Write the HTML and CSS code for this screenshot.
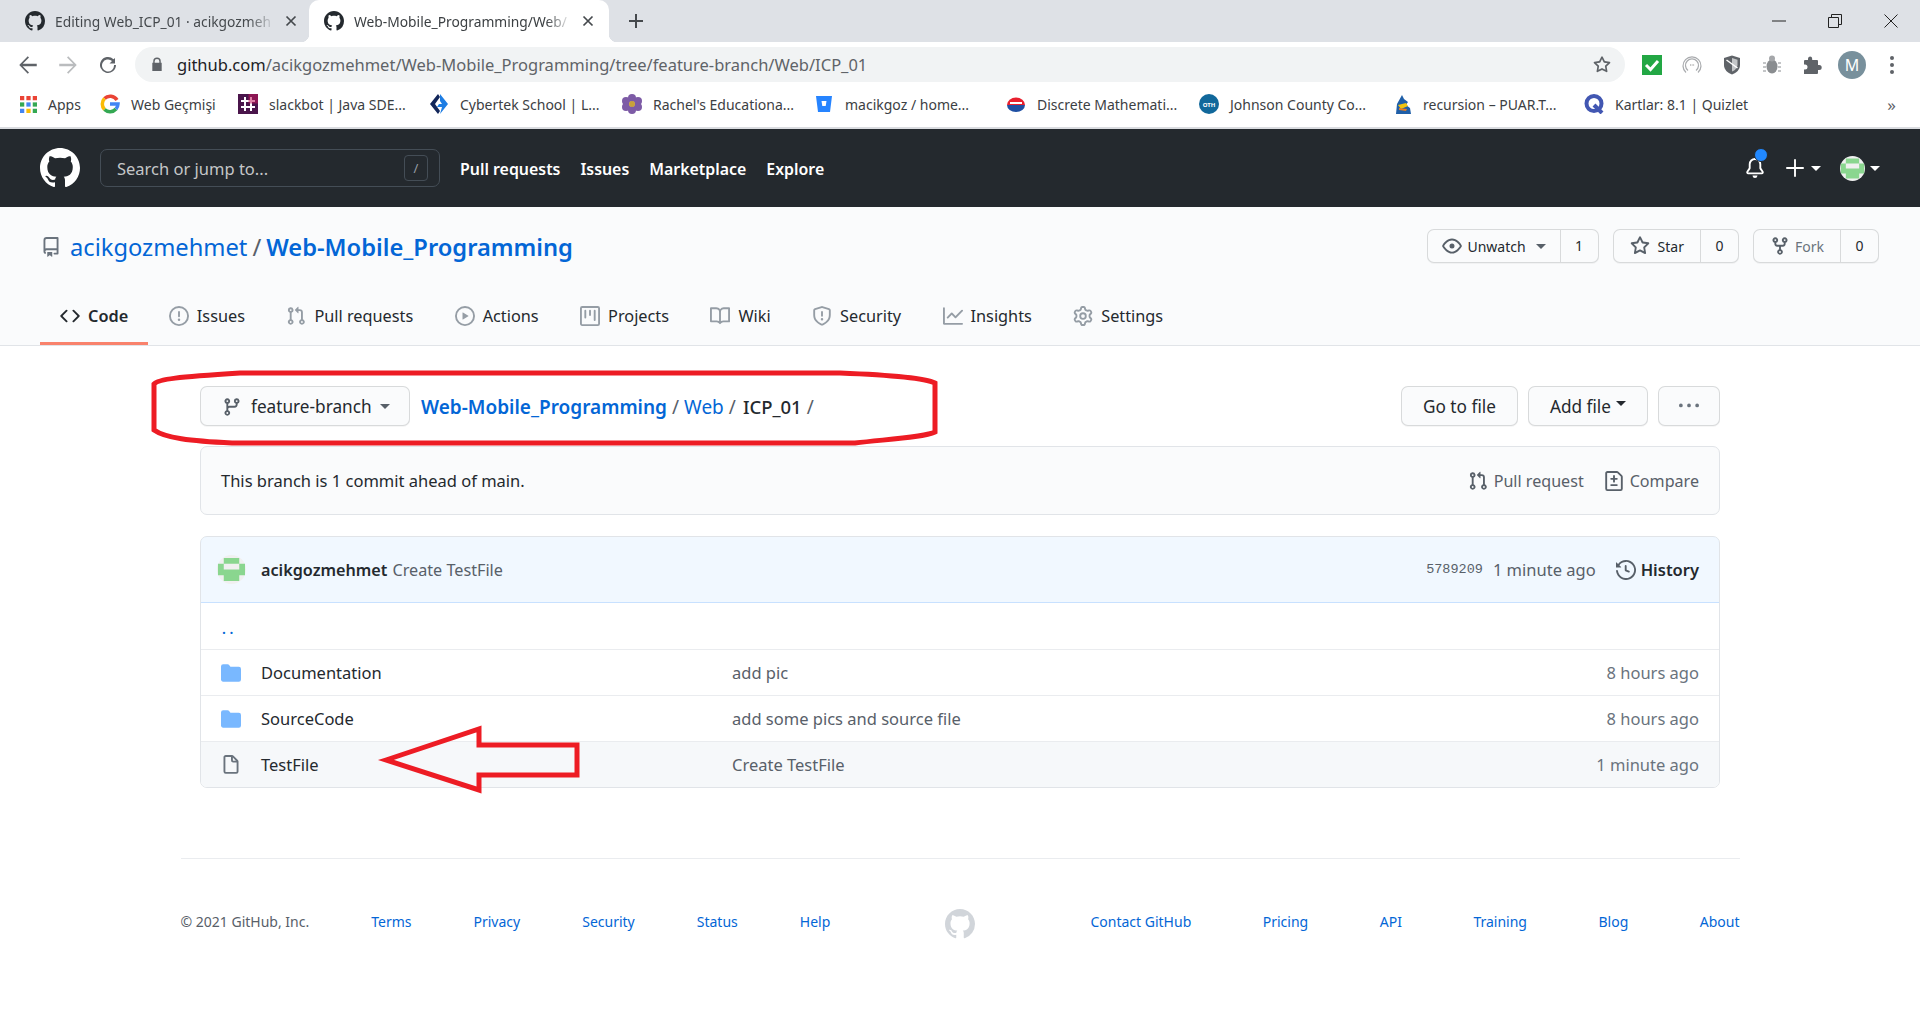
FILE: index.html
```html
<!DOCTYPE html>
<html>
<head>
	<meta charset="utf-8">
	<title>Web-Mobile_Programming/Web/ICP_01</title>
	<link rel="stylesheet" href="styles.css">
</head>
<body>
	<svg class="sprite" width="0" height="0">
		<symbol id="i-mark" viewBox="0 0 16 16"><path d="M8 0C3.58 0 0 3.58 0 8c0 3.54 2.29 6.53 5.47 7.59.4.07.55-.17.55-.38 0-.19-.01-.82-.01-1.49-2.01.37-2.53-.49-2.69-.94-.09-.23-.48-.94-.82-1.13-.28-.15-.68-.52-.01-.53.63-.01 1.08.58 1.23.82.72 1.21 1.87.87 2.33.66.07-.52.28-.87.51-1.07-1.78-.2-3.64-.89-3.64-3.95 0-.87.31-1.59.82-2.15-.08-.2-.36-1.02.08-2.12 0 0 .67-.21 2.2.82.64-.18 1.32-.27 2-.27.68 0 1.36.09 2 .27 1.53-1.04 2.2-.82 2.2-.82.44 1.1.16 1.92.08 2.12.51.56.82 1.27.82 2.15 0 3.07-1.87 3.75-3.65 3.95.29.25.54.73.54 1.48 0 1.07-.01 1.93-.01 2.2 0 .21.15.46.55.38A8.013 8.013 0 0016 8c0-4.42-3.58-8-8-8z"/></symbol>
		<symbol id="i-repo" viewBox="0 0 16 16"><path d="M2 2.5A2.5 2.5 0 014.5 0h8.75a.75.75 0 01.75.75v12.5a.75.75 0 01-.75.75h-2.5a.75.75 0 110-1.5h1.75v-2h-8a1 1 0 00-.714 1.7.75.75 0 01-1.072 1.05A2.495 2.495 0 012 11.5v-9zm10.5-1V9h-8c-.356 0-.694.074-1 .208V2.5a1 1 0 011-1h8zM5 12.25v3.25a.25.25 0 00.4.2l1.45-1.087a.25.25 0 01.3 0L8.6 15.7a.25.25 0 00.4-.2v-3.25a.25.25 0 00-.25-.25h-3.5a.25.25 0 00-.25.25z"/></symbol>
		<symbol id="i-code" viewBox="0 0 16 16"><path d="M4.72 3.22a.75.75 0 011.06 1.06L2.06 8l3.72 3.72a.75.75 0 11-1.06 1.06L.47 8.53a.75.75 0 010-1.06l4.25-4.25zm6.56 0a.75.75 0 10-1.06 1.06L13.94 8l-3.72 3.72a.75.75 0 101.06 1.06l4.25-4.25a.75.75 0 000-1.06l-4.25-4.25z"/></symbol>
		<symbol id="i-issue" viewBox="0 0 16 16"><path d="M8 1.5a6.5 6.5 0 100 13 6.5 6.5 0 000-13zM0 8a8 8 0 1116 0A8 8 0 010 8zm9 3a1 1 0 11-2 0 1 1 0 012 0zm-.25-6.25a.75.75 0 00-1.5 0v3.5a.75.75 0 001.5 0v-3.5z"/></symbol>
		<symbol id="i-pr" viewBox="0 0 16 16"><path d="M7.177 3.073L9.573.677A.25.25 0 0110 .854v4.792a.25.25 0 01-.427.177L7.177 3.427a.25.25 0 010-.354zM3.75 2.5a.75.75 0 100 1.5.75.75 0 000-1.5zm-2.25.75a2.25 2.25 0 113 2.122v5.256a2.251 2.251 0 11-1.5 0V5.372A2.25 2.25 0 011.5 3.25zM11 2.5h-1V4h1a1 1 0 011 1v5.628a2.251 2.251 0 101.5 0V5A2.5 2.5 0 0011 2.5zm1 10.25a.75.75 0 111.5 0 .75.75 0 01-1.5 0zM3.75 12a.75.75 0 100 1.5.75.75 0 000-1.5z"/></symbol>
		<symbol id="i-play" viewBox="0 0 16 16"><path d="M1.5 8a6.5 6.5 0 1113 0 6.5 6.5 0 01-13 0zM8 0a8 8 0 100 16A8 8 0 008 0zM6.379 5.227A.25.25 0 006 5.442v5.117a.25.25 0 00.379.214l4.264-2.559a.25.25 0 000-.428L6.379 5.227z"/></symbol>
		<symbol id="i-project" viewBox="0 0 16 16"><path d="M1.75 0A1.75 1.75 0 000 1.75v12.5C0 15.216.784 16 1.75 16h12.5A1.75 1.75 0 0016 14.25V1.75A1.75 1.75 0 0014.25 0H1.75zM1.5 1.75a.25.25 0 01.25-.25h12.5a.25.25 0 01.25.25v12.5a.25.25 0 01-.25.25H1.75a.25.25 0 01-.25-.25V1.75zM11.75 3a.75.75 0 00-.75.75v7.5a.75.75 0 001.5 0v-7.5a.75.75 0 00-.75-.75zm-8.25.75a.75.75 0 011.5 0v5.5a.75.75 0 01-1.5 0v-5.5zM8 3a.75.75 0 00-.75.75v3.5a.75.75 0 001.5 0v-3.5A.75.75 0 008 3z"/></symbol>
		<symbol id="i-book" viewBox="0 0 16 16"><path d="M0 1.75A.75.75 0 01.75 1h4.253c1.227 0 2.317.59 3 1.501A3.744 3.744 0 0111.006 1h4.245a.75.75 0 01.75.75v10.5a.75.75 0 01-.75.75h-4.507a2.25 2.25 0 00-1.591.659l-.622.621a.75.75 0 01-1.06 0l-.622-.621A2.25 2.25 0 005.258 13H.75a.75.75 0 01-.75-.75V1.75zm8.755 3a2.25 2.25 0 012.25-2.25H14.5v9h-3.757c-.71 0-1.4.201-1.992.572l.004-7.322zm-1.504 7.324l.004-5.073-.002-2.253A2.25 2.25 0 005.003 2.5H1.5v9h3.757a3.75 3.75 0 011.994.574z"/></symbol>
		<symbol id="i-shield" viewBox="0 0 16 16"><path d="M7.467.133a1.75 1.75 0 011.066 0l5.25 1.68A1.75 1.75 0 0115 3.48V7c0 1.566-.32 3.182-1.303 4.682-.983 1.498-2.585 2.813-5.032 3.855a1.7 1.7 0 01-1.33 0c-2.447-1.042-4.049-2.357-5.032-3.855C1.32 10.182 1 8.566 1 7V3.48a1.75 1.75 0 011.217-1.667l5.25-1.68zm.61 1.429a.25.25 0 00-.153 0l-5.25 1.68a.25.25 0 00-.174.238V7c0 1.358.275 2.666 1.057 3.86.784 1.194 2.121 2.34 4.366 3.297a.2.2 0 00.154 0c2.245-.956 3.582-2.104 4.366-3.298C13.225 9.666 13.5 8.36 13.5 7V3.48a.25.25 0 00-.174-.237l-5.25-1.68zM9 10.5a1 1 0 11-2 0 1 1 0 012 0zm-.25-5.75a.75.75 0 10-1.5 0v3a.75.75 0 001.5 0v-3z"/></symbol>
		<symbol id="i-graph" viewBox="0 0 16 16"><path d="M1.5 1.75a.75.75 0 00-1.5 0v12.5c0 .414.336.75.75.75h14.5a.75.75 0 000-1.5H1.5V1.75zm14.28 2.53a.75.75 0 00-1.06-1.06L10 7.94 7.53 5.47a.75.75 0 00-1.06 0L3.22 8.72a.75.75 0 001.06 1.06L7 7.06l2.47 2.47a.75.75 0 001.06 0l5.25-5.25z"/></symbol>
		<symbol id="i-gear" viewBox="0 0 16 16"><path d="M7.429 1.525a6.593 6.593 0 011.142 0c.036.003.108.036.137.146l.289 1.105c.147.56.55.967.997 1.189.174.086.341.183.501.29.417.278.97.423 1.53.27l1.102-.303c.11-.03.175.016.195.046.219.31.41.641.573.989.014.031.022.11-.059.19l-.815.806c-.411.406-.562.957-.53 1.456a4.588 4.588 0 010 .582c-.032.499.119 1.05.53 1.456l.815.806c.08.08.073.159.059.19a6.494 6.494 0 01-.573.99c-.02.029-.086.074-.195.045l-1.103-.303c-.559-.153-1.112-.008-1.529.27-.16.107-.327.204-.5.29-.449.222-.851.628-.998 1.189l-.289 1.105c-.029.11-.101.143-.137.146a6.613 6.613 0 01-1.142 0c-.036-.003-.108-.037-.137-.146l-.289-1.105c-.147-.56-.55-.967-.997-1.189a4.502 4.502 0 01-.501-.29c-.417-.278-.97-.423-1.53-.27l-1.102.303c-.11.03-.175-.016-.195-.046a6.492 6.492 0 01-.573-.989c-.014-.031-.022-.11.059-.19l.815-.806c.411-.406.562-.957.53-1.456a4.587 4.587 0 010-.582c.032-.499-.119-1.05-.53-1.456l-.815-.806c-.08-.08-.073-.159-.059-.19a6.44 6.44 0 01.573-.99c.02-.029.086-.075.195-.045l1.103.303c.559.153 1.112.008 1.529-.27.16-.107.327-.204.5-.29.449-.222.851-.628.998-1.189l.289-1.105c.029-.11.101-.143.137-.146zM8 0c-.236 0-.47.01-.701.03-.743.065-1.29.615-1.458 1.261l-.29 1.106c-.017.066-.078.158-.211.224a5.994 5.994 0 00-.668.386c-.123.082-.233.09-.3.071L3.27 2.776c-.644-.177-1.392.02-1.82.63a7.977 7.977 0 00-.704 1.217c-.315.675-.111 1.422.363 1.891l.815.806c.05.048.098.147.088.294a6.084 6.084 0 000 .772c.01.147-.038.246-.088.294l-.815.806c-.474.469-.678 1.216-.363 1.891.2.428.436.835.704 1.218.428.609 1.176.806 1.82.63l1.103-.303c.066-.019.176-.011.299.071.213.143.436.272.668.386.133.066.194.158.212.224l.289 1.106c.169.646.715 1.196 1.458 1.26a8.094 8.094 0 001.402 0c.743-.064 1.29-.614 1.458-1.26l.29-1.106c.017-.066.078-.158.211-.224a5.98 5.98 0 00.668-.386c.123-.082.233-.09.3-.071l1.102.302c.644.177 1.392-.02 1.82-.63.268-.382.505-.789.704-1.217.315-.675.111-1.422-.364-1.891l-.814-.806c-.05-.048-.098-.147-.088-.294a6.1 6.1 0 000-.772c-.01-.147.039-.246.088-.294l.814-.806c.475-.469.679-1.216.364-1.891a7.992 7.992 0 00-.704-1.218c-.428-.609-1.176-.806-1.82-.63l-1.103.303c-.066.019-.176.011-.299-.071a5.991 5.991 0 00-.668-.386c-.133-.066-.194-.158-.212-.224L10.16 1.29C9.99.645 9.444.095 8.701.031A8.094 8.094 0 008 0zm1.5 8a1.5 1.5 0 11-3 0 1.5 1.5 0 013 0zM11 8a3 3 0 11-6 0 3 3 0 016 0z"/></symbol>
		<symbol id="i-eye" viewBox="0 0 16 16"><path d="M1.679 7.932c.412-.621 1.242-1.75 2.366-2.717C5.175 4.242 6.527 3.5 8 3.5c1.473 0 2.824.742 3.955 1.715 1.124.967 1.954 2.096 2.366 2.717a.119.119 0 010 .136c-.412.621-1.242 1.75-2.366 2.717C10.825 11.758 9.473 12.5 8 12.5c-1.473 0-2.824-.742-3.955-1.715C2.92 9.818 2.09 8.69 1.679 8.068a.119.119 0 010-.136zM8 2c-1.981 0-3.67.992-4.933 2.078C1.797 5.169.88 6.423.43 7.1a1.619 1.619 0 000 1.798c.45.678 1.367 1.932 2.637 3.024C4.329 13.008 6.019 14 8 14c1.981 0 3.67-.992 4.933-2.078 1.27-1.091 2.187-2.345 2.637-3.023a1.619 1.619 0 000-1.798c-.45-.678-1.367-1.932-2.637-3.023C11.671 2.992 9.981 2 8 2zm0 8a2 2 0 100-4 2 2 0 000 4z"/></symbol>
		<symbol id="i-star" viewBox="0 0 16 16"><path d="M8 .25a.75.75 0 01.673.418l1.882 3.815 4.21.612a.75.75 0 01.416 1.279l-3.046 2.97.719 4.192a.75.75 0 01-1.088.791L8 12.347l-3.766 1.98a.75.75 0 01-1.088-.79l.72-4.194L.818 6.374a.75.75 0 01.416-1.28l4.21-.611L7.327.668A.75.75 0 018 .25zm0 2.445L6.615 5.5a.75.75 0 01-.564.41l-3.097.45 2.24 2.184a.75.75 0 01.216.664l-.528 3.084 2.769-1.456a.75.75 0 01.698 0l2.77 1.456-.53-3.084a.75.75 0 01.216-.664l2.24-2.183-3.096-.45a.75.75 0 01-.564-.41L8 2.694v.001z"/></symbol>
		<symbol id="i-fork" viewBox="0 0 16 16"><path d="M5 3.25a.75.75 0 11-1.5 0 .75.75 0 011.5 0zm0 2.122a2.25 2.25 0 10-1.5 0v.878A2.25 2.25 0 005.75 8.5h1.5v2.128a2.251 2.251 0 101.5 0V8.5h1.5a2.25 2.25 0 002.25-2.25v-.878a2.25 2.25 0 10-1.5 0v.878a.75.75 0 01-.75.75h-4.5A.75.75 0 015 6.25v-.878zm3.75 7.378a.75.75 0 11-1.5 0 .75.75 0 011.5 0zm3-8.75a.75.75 0 100-1.5.75.75 0 000 1.5z"/></symbol>
		<symbol id="i-branch" viewBox="0 0 16 16"><path d="M11.75 2.5a.75.75 0 100 1.5.75.75 0 000-1.5zm-2.25.75a2.25 2.25 0 113 2.122V6A2.5 2.5 0 0110 8.5H6a1 1 0 00-1 1v1.128a2.251 2.251 0 11-1.5 0V5.372a2.25 2.25 0 111.5 0v1.836A2.492 2.492 0 016 7h4a1 1 0 001-1v-.628A2.25 2.25 0 019.5 3.25zM4.25 12a.75.75 0 100 1.5.75.75 0 000-1.5zM3.5 3.25a.75.75 0 111.5 0 .75.75 0 01-1.5 0z"/></symbol>
		<symbol id="i-compare" viewBox="0 0 16 16"><path d="M2.75 1.5a.25.25 0 00-.25.25v12.5c0 .138.112.25.25.25h10.5a.25.25 0 00.25-.25V4.664a.25.25 0 00-.073-.177l-2.914-2.914a.25.25 0 00-.177-.073H2.75zM1 1.75C1 .784 1.784 0 2.75 0h7.586c.464 0 .909.184 1.237.513l2.914 2.914c.329.328.513.773.513 1.237v9.586A1.75 1.75 0 0113.25 16H2.75A1.75 1.75 0 011 14.25V1.75zm7 1.5a.75.75 0 01.75.75v1.5h1.5a.75.75 0 010 1.5h-1.5v1.5a.75.75 0 01-1.5 0V7h-1.5a.75.75 0 010-1.5h1.5V4A.75.75 0 018 3.25zm-3 8a.75.75 0 01.75-.75h4.5a.75.75 0 010 1.5h-4.5a.75.75 0 01-.75-.75z"/></symbol>
		<symbol id="i-history" viewBox="0 0 16 16"><path d="M1.643 3.143L.427 1.927A.25.25 0 000 2.104V5.75c0 .138.112.25.25.25h3.646a.25.25 0 00.177-.427L2.715 4.215a6.5 6.5 0 11-1.18 4.458.75.75 0 10-1.493.154 8.001 8.001 0 101.6-5.684zM7.75 4a.75.75 0 01.75.75v2.992l2.028.812a.75.75 0 01-.557 1.392l-2.5-1A.75.75 0 017 8.25v-3.5A.75.75 0 017.75 4z"/></symbol>
		<symbol id="i-file" viewBox="0 0 16 16"><path d="M3.75 1.5a.25.25 0 00-.25.25v11.5c0 .138.112.25.25.25h8.5a.25.25 0 00.25-.25V6H9.75A1.75 1.75 0 018 4.25V1.5H3.75zm5.75.56v2.19c0 .138.112.25.25.25h2.19L9.5 2.06zM2 1.75C2 .784 2.784 0 3.75 0h5.086c.464 0 .909.184 1.237.513l3.414 3.414c.329.328.513.773.513 1.237v8.086A1.75 1.75 0 0112.25 15h-8.5A1.75 1.75 0 012 13.25V1.75z"/></symbol>
		<symbol id="i-folder" viewBox="0 0 16 16"><path d="M1.75 1A1.75 1.75 0 000 2.75v10.5C0 14.216.784 15 1.75 15h12.5A1.75 1.75 0 0016 13.25v-8.5A1.75 1.75 0 0014.25 3h-6.5a.25.25 0 01-.2-.1l-.9-1.2c-.33-.44-.85-.7-1.4-.7h-3.5z"/></symbol>
		<symbol id="i-bell" viewBox="0 0 16 16"><path d="M8 16a2 2 0 001.985-1.75c.017-.137-.097-.25-.235-.25h-3.5c-.138 0-.252.113-.235.25A2 2 0 008 16z"/><path d="M3 5a5 5 0 0110 0v2.947c0 .05.015.098.042.139l1.703 2.555A1.518 1.518 0 0113.482 13H2.518a1.518 1.518 0 01-1.263-2.36l1.703-2.554A.25.25 0 003 7.947V5zm5-3.5A3.5 3.5 0 004.5 5v2.947c0 .346-.102.683-.294.97l-1.703 2.556a.018.018 0 00-.003.01l.001.006c0 .002.002.004.004.006a.017.017 0 00.006.004l.007.001h10.964l.007-.001a.018.018 0 00.006-.004.016.016 0 00.004-.006l.001-.007a.017.017 0 00-.003-.01l-1.703-2.554a1.75 1.75 0 01-.294-.97V5A3.5 3.5 0 008 1.5z"/></symbol>
		<symbol id="i-close" viewBox="0 0 12 12"><path d="M1.5 1.5l9 9M10.5 1.5l-9 9" fill="none" stroke="currentColor" stroke-width="1.7"/></symbol>
		<symbol id="i-identicon" viewBox="0 0 30 30"><circle cx="15" cy="15" r="15" fill="#f0f0f0"/><path fill="#8ad68f" d="M7 3h16v6h6v6H23V9H7v6H1V9h6zM1 15h28v6h-6v6H7v-6H1z"/></symbol>
	</svg>

	<div class="tabstrip">
		<div class="tab">
			<svg class="tab-icon"><use href="#i-mark"/></svg>
			<span class="tab-title">Editing Web_ICP_01 · acikgozmeh</span>
			<svg class="tab-close"><use href="#i-close"/></svg>
		</div>
		<div class="tab tab-active">
			<svg class="tab-icon"><use href="#i-mark"/></svg>
			<span class="tab-title">Web-Mobile_Programming/Web/</span>
			<svg class="tab-close"><use href="#i-close"/></svg>
		</div>
		<svg class="new-tab" viewBox="0 0 16 16"><path d="M7 1h2v6h6v2H9v6H7V9H1V7h6z"/></svg>
		<div class="win-controls">
			<svg viewBox="0 0 14 14"><path d="M0 7h14" stroke="#222" fill="none"/></svg>
			<svg viewBox="0 0 14 14"><path d="M.5 3.5h10v10H.5zM3.5 3V.5h10v10H11" stroke="#222" fill="none"/></svg>
			<svg viewBox="0 0 14 14"><path d="M.5.5l13 13M13.5.5l-13 13" stroke="#222" fill="none"/></svg>
		</div>
	</div>

	<div class="toolbar">
		<svg class="nav-btn" viewBox="0 0 16 16"><path d="M15 7H3.8l5-5L7.8 1 1 8l6.8 7 1-1-5-5H15z" fill="#5f6368"/></svg>
		<svg class="nav-btn" viewBox="0 0 16 16"><path d="M1 7h11.2l-5-5 1-1L15 8l-6.8 7-1-1 5-5H1z" fill="#babcbe"/></svg>
		<svg class="nav-btn" viewBox="0 0 16 16"><path d="M13.6 2.4v4.4H9.2l2-2A4.8 4.8 0 1012.8 8h1.6a6.4 6.4 0 11-2-4.7z" fill="#5f6368"/></svg>
		<div class="omnibox">
			<svg class="lock" viewBox="0 0 12 16"><path d="M2 6V4.5a4 4 0 018 0V6h1v9H1V6zm1.5 0h5V4.5a2.5 2.5 0 00-5 0z" fill="#5f6368"/></svg>
			<span class="url"><b>github.com</b>/acikgozmehmet/Web-Mobile_Programming/tree/feature-branch/Web/ICP_01</span>
			<svg class="omni-star" viewBox="0 0 16 16"><use href="#i-star"/></svg>
		</div>
		<div class="extensions">
			<svg viewBox="0 0 20 20"><rect width="20" height="20" fill="#22a744"/><path d="M4 10l4.5 4.5L16 6" fill="none" stroke="#fff" stroke-width="3"/></svg>
			<svg viewBox="0 0 20 20"><g fill="none" stroke="#a9abae" stroke-width="1.2"><path d="M4 17.5A9 9 0 1116 17.5"/><path d="M6 15.5a6.5 6.5 0 118 0"/><path d="M8 10h.8M9.7 10h.8M11.3 10h.8" stroke="#777"/></g></svg>
			<svg viewBox="0 0 20 20"><path d="M10 .5l8 2.5v7c0 4.5-3.5 8-8 9.5-4.5-1.5-8-5-8-9.5V3z" fill="#5f6368"/><path d="M10 3l5.5 1.8v5c0 3-2.5 5.6-5.5 6.8z" fill="#c4c6c8"/><path d="M4.5 5l11 8" stroke="#fff" stroke-width="1.5"/></svg>
			<svg viewBox="0 0 20 20"><ellipse cx="10" cy="11.5" rx="5.5" ry="7" fill="#8a8d90"/><circle cx="10" cy="3.5" r="3" fill="#a5a7aa"/><path d="M1 8h3M1 12h3M1 16h3M16 8h3M16 12h3M16 16h3" stroke="#b0b2b5" stroke-width="1.5"/></svg>
			<svg viewBox="0 0 20 20"><path d="M8 1.5a2.2 2.2 0 012.2 2.2V5H15a1 1 0 011 1v4h1.2a2.5 2.5 0 010 5H16v3a1 1 0 01-1 1H2V14.5h1a2.5 2.5 0 000-5H2V6a1 1 0 011-1h3V3.7A2.2 2.2 0 018 1.5z" fill="#5f6368"/></svg>
			<span class="profile">M</span>
			<svg class="kebab" viewBox="0 0 4 20"><circle cx="2" cy="3" r="2"/><circle cx="2" cy="10" r="2"/><circle cx="2" cy="17" r="2"/></svg>
		</div>
	</div>

	<div class="bookmarks">
		<a class="bm"><svg viewBox="0 0 16 16"><g fill="#ea4335"><rect width="4" height="4"/><rect x="6" width="4" height="4"/><rect x="12" width="4" height="4"/></g><g fill="#34a853"><rect y="6" width="4" height="4"/><rect x="12" y="6" width="4" height="4"/><rect x="12" y="12" width="4" height="4"/></g><g fill="#4285f4"><rect x="6" y="6" width="4" height="4"/><rect y="12" width="4" height="4"/></g><g fill="#fbbc05"><rect x="6" y="12" width="4" height="4"/></g></svg>Apps</a>
		<a class="bm"><svg viewBox="0 0 20 20"><g fill="none" stroke-width="3.5"><path d="M17 6a8 8 0 00-12.5-1.5" stroke="#ea4335"/><path d="M4.5 4.5a8 8 0 000 11" stroke="#fbbc05"/><path d="M4.5 15.5A8 8 0 0016 15" stroke="#34a853"/><path d="M16 15a8 8 0 002-5H10" stroke="#4285f4"/></g></svg>Web Geçmişi</a>
		<a class="bm"><svg viewBox="0 0 20 20"><rect width="20" height="20" fill="#4a154b"/><path d="M7 3v14M13 3v14M3 7h14M3 13h14" stroke="#fff" stroke-width="2"/><rect x="10.5" width="9.5" height="9.5" fill="#c2185b" opacity=".55"/></svg>slackbot | Java SDE...</a>
		<a class="bm"><svg viewBox="0 0 20 20"><path d="M9 0L1 10l8 10 2-3-5-7 5-7z" fill="#12265a"/><path d="M11 0l8 10-8 10 2-7H8l2-3h3l-2-3z" fill="#1d7de3"/></svg>Cybertek School | L...</a>
		<a class="bm"><svg viewBox="0 0 20 20"><g fill="#7d5ba6"><circle cx="10" cy="4" r="4"/><circle cx="10" cy="16" r="4"/><circle cx="4" cy="7" r="4"/><circle cx="16" cy="7" r="4"/><circle cx="4" cy="13" r="4"/><circle cx="16" cy="13" r="4"/></g><circle cx="10" cy="10" r="3" fill="#c9a23a"/></svg>Rachel's Educationa...</a>
		<a class="bm"><svg viewBox="0 0 20 20"><path d="M2 2h16l-2 16H4z" fill="#2684ff"/><path d="M7.5 7h5l-.8 5H8.3z" fill="#fff"/></svg>macikgoz / home...</a>
		<a class="bm"><svg viewBox="0 0 20 20"><path d="M1 11a9 7.5 0 0118 0z" fill="#e8202e"/><path d="M1 11h18a9 7 0 01-18 0z" fill="#1e4fa3"/><path d="M4 9h12" stroke="#fff" stroke-width="2"/></svg>Discrete Mathemati...</a>
		<a class="bm"><svg viewBox="0 0 20 20"><circle cx="10" cy="10" r="10" fill="#11689b"/><text x="10" y="12.5" class="oth">OTH</text></svg>Johnson County Co...</a>
		<a class="bm"><svg viewBox="0 0 20 20"><path d="M4 20l1-10 5-9 2 4 4 3-2 3 4 3 1 6z" fill="#1f5fa8"/><path d="M6 11l8-2 2 3-7 3z" fill="#f1c40f"/><path d="M7 14l8 1-1 2-7-1z" fill="#e67e22"/></svg>recursion – PUAR.T...</a>
		<a class="bm"><svg viewBox="0 0 20 20"><circle cx="10" cy="9.5" r="7.5" fill="none" stroke="#4257b2" stroke-width="4"/><path d="M10 11l8 8" stroke="#4257b2" stroke-width="4"/></svg>Kartlar: 8.1 | Quizlet</a>
		<span class="bm-more">»</span>
	</div>

	<header class="site-header">
		<svg class="site-logo"><use href="#i-mark"/></svg>
		<div class="search">
			<span>Search or jump to...</span>
			<kbd>/</kbd>
		</div>
		<nav class="site-nav">
			<a>Pull requests</a>
			<a>Issues</a>
			<a>Marketplace</a>
			<a>Explore</a>
		</nav>
		<div class="site-actions">
			<span class="bell"><svg><use href="#i-bell"/></svg><i class="bell-dot"></i></span>
			<span class="site-action"><svg class="plus" viewBox="0 0 16 16"><path d="M7.25 1h1.5v6.25H15v1.5H8.75V15h-1.5V8.75H1v-1.5h6.25z"/></svg><i class="caret"></i></span>
			<span class="site-action"><svg class="site-avatar"><use href="#i-identicon"/></svg><i class="caret"></i></span>
		</div>
	</header>

	<div class="repo-head">
		<div class="repo-title-row">
			<h1 class="repo-title">
				<svg class="repo-icon"><use href="#i-repo"/></svg>
				<a class="owner">acikgozmehmet</a>
				<span class="slash">/</span>
				<a class="repo-name">Web-Mobile_Programming</a>
			</h1>
			<div class="repo-actions">
				<div class="counter-btn">
					<span class="btn-main btn-watch"><svg><use href="#i-eye"/></svg>Unwatch<i class="caret caret-dark"></i></span>
					<span class="btn-count">1</span>
				</div>
				<div class="counter-btn">
					<span class="btn-main btn-star"><svg><use href="#i-star"/></svg>Star</span>
					<span class="btn-count">0</span>
				</div>
				<div class="counter-btn">
					<span class="btn-main btn-muted"><svg><use href="#i-fork"/></svg>Fork</span>
					<span class="btn-count">0</span>
				</div>
			</div>
		</div>
		<nav class="repo-nav">
			<a class="repo-tab selected"><svg><use href="#i-code"/></svg>Code</a>
			<a class="repo-tab"><svg><use href="#i-issue"/></svg>Issues</a>
			<a class="repo-tab"><svg><use href="#i-pr"/></svg>Pull requests</a>
			<a class="repo-tab"><svg><use href="#i-play"/></svg>Actions</a>
			<a class="repo-tab"><svg><use href="#i-project"/></svg>Projects</a>
			<a class="repo-tab"><svg><use href="#i-book"/></svg>Wiki</a>
			<a class="repo-tab"><svg><use href="#i-shield"/></svg>Security</a>
			<a class="repo-tab"><svg><use href="#i-graph"/></svg>Insights</a>
			<a class="repo-tab"><svg><use href="#i-gear"/></svg>Settings</a>
		</nav>
	</div>

	<main class="content">
		<div class="file-nav">
			<button class="btn branch-btn"><svg><use href="#i-branch"/></svg>feature-branch<i class="caret caret-dark"></i></button>
			<div class="crumbs">
				<a class="crumb-root">Web-Mobile_Programming</a>
				<span class="sep">/</span>
				<a>Web</a>
				<span class="sep">/</span>
				<strong>ICP_01</strong>
				<span class="sep">/</span>
			</div>
			<div class="file-actions">
				<button class="btn">Go to file</button>
				<button class="btn">Add file<i class="caret caret-up"></i></button>
				<button class="btn btn-more"><svg viewBox="0 0 16 16"><path d="M8 9a1.5 1.5 0 100-3 1.5 1.5 0 000 3zM1.5 9a1.5 1.5 0 100-3 1.5 1.5 0 000 3zm13 0a1.5 1.5 0 100-3 1.5 1.5 0 000 3z"/></svg></button>
			</div>
		</div>

		<div class="branch-info">
			<span>This branch is 1 commit ahead of main.</span>
			<div class="branch-links">
				<a><svg><use href="#i-pr"/></svg>Pull request</a>
				<a><svg><use href="#i-compare"/></svg>Compare</a>
			</div>
		</div>

		<div class="file-box">
			<div class="commit-row">
				<svg class="commit-avatar"><use href="#i-identicon"/></svg>
				<strong class="commit-author">acikgozmehmet</strong>
				<span class="commit-msg">Create TestFile</span>
				<code class="sha">5789209</code>
				<span class="commit-age">1 minute ago</span>
				<a class="history"><svg><use href="#i-history"/></svg>History</a>
			</div>
			<div class="file-row up-row"><a>. .</a></div>
			<div class="file-row">
				<svg class="ficon folder"><use href="#i-folder"/></svg>
				<a class="fname">Documentation</a>
				<span class="fmsg">add pic</span>
				<span class="fage">8 hours ago</span>
			</div>
			<div class="file-row">
				<svg class="ficon folder"><use href="#i-folder"/></svg>
				<a class="fname">SourceCode</a>
				<span class="fmsg">add some pics and source file</span>
				<span class="fage">8 hours ago</span>
			</div>
			<div class="file-row hovered">
				<svg class="ficon doc"><use href="#i-file"/></svg>
				<a class="fname">TestFile</a>
				<span class="fmsg">Create TestFile</span>
				<span class="fage">1 minute ago</span>
			</div>
		</div>
	</main>

	<footer class="site-footer">
		<div class="footer-links">
			<span class="copyright">© 2021 GitHub, Inc.</span>
			<a>Terms</a>
			<a>Privacy</a>
			<a>Security</a>
			<a>Status</a>
			<a>Help</a>
		</div>
		<svg class="footer-logo"><use href="#i-mark"/></svg>
		<div class="footer-links footer-right">
			<a>Contact GitHub</a>
			<a>Pricing</a>
			<a>API</a>
			<a>Training</a>
			<a>Blog</a>
			<a>About</a>
		</div>
	</footer>

	<!-- red marks drawn over the screenshot -->
	<svg class="annotations" viewBox="0 0 1920 1030">
		<path d="M154 430V384C158 379 178 377 240 373H840C890 375 925 378 935 383V432C925 437 890 439 855 443H232C190 441 165 438 154 430z"/>
		<path d="M386 760L479 729V745H577V775H479V790z"/>
	</svg>
</body>
</html>
```

FILE: styles.css
```css
* {
	margin: 0;
	padding: 0;
	box-sizing: border-box;
}
body {
	width: 1920px;
	height: 1030px;
	position: relative;
	overflow: hidden;
	background: #fff;
	color: #24292e;
	font-family: "Noto Sans", "Open Sans", sans-serif;
	font-size: 16.5px;
}
svg {
	fill: currentColor;
	fill-rule: evenodd;
	flex: none;
}
a {
	color: inherit;
	text-decoration: none;
}
.sprite {
	position: absolute;
}

/* browser chrome */
.tabstrip {
	display: flex;
	align-items: center;
	height: 42px;
	padding-left: 10px;
	background: #dee1e6;
	font-size: 13.8px;
	color: #45494d;
}
.tab {
	display: flex;
	align-items: center;
	width: 299px;
	height: 42px;
	padding: 0 12px 0 15px;
	position: relative;
}
.tab-active {
	width: 300px;
	padding-right: 15px;
	background: #fff;
	border-radius: 10px 10px 0 0;
	color: #3c4043;
}
.tab-active::before,
.tab-active::after {
	content: "";
	position: absolute;
	bottom: 0;
	width: 8px;
	height: 8px;
}
.tab-active::before {
	left: -8px;
	background: radial-gradient(circle at 0 0, transparent 8px, #fff 8.5px);
}
.tab-active::after {
	right: -8px;
	background: radial-gradient(circle at 100% 0, transparent 8px, #fff 8.5px);
}
.tab-icon {
	width: 20px;
	height: 20px;
	margin-right: 10px;
	color: #24292e;
}
.tab-title {
	flex: 1;
	overflow: hidden;
	white-space: nowrap;
	-webkit-mask-image: linear-gradient(to right, #000 88%, transparent);
	mask-image: linear-gradient(to right, #000 88%, transparent);
}
.tab-close {
	width: 12px;
	height: 12px;
	margin-left: 10px;
	color: #45494d;
}
.new-tab {
	width: 16px;
	height: 16px;
	margin-left: 19px;
	color: #45494d;
}
.win-controls {
	display: flex;
	gap: 42px;
	margin-left: auto;
	padding-right: 22px;
}
.win-controls svg {
	width: 14px;
	height: 14px;
}

.toolbar {
	display: flex;
	align-items: center;
	height: 40px;
	padding: 5px 0 0 18px;
	background: #fff;
}
.nav-btn {
	width: 20px;
	height: 20px;
	margin-right: 20px;
}
.omnibox {
	display: flex;
	align-items: center;
	width: 1490px;
	height: 35px;
	margin-left: -3px;
	padding: 0 14px 0 16px;
	background: #f1f3f4;
	border-radius: 18px;
}
.lock {
	width: 12px;
	height: 15px;
	margin: 0 14px 0 0;
}
.url {
	flex: 1;
	font-size: 16.5px;
	color: #5f6368;
	white-space: nowrap;
}
.url b {
	font-weight: 400;
	color: #202124;
}
.omni-star {
	width: 18px;
	height: 18px;
	color: #5f6368;
}
.extensions {
	display: flex;
	align-items: center;
	gap: 20px;
	margin-left: 17px;
}
.extensions svg {
	width: 20px;
	height: 20px;
}
.extensions .kebab {
	width: 4px;
	color: #5f6368;
	margin-left: 8px;
}
.profile {
	width: 28px;
	height: 28px;
	margin: 0 -4px;
	border-radius: 50%;
	background: #78909c;
	color: #fff;
	font-size: 16px;
	line-height: 28px;
	text-align: center;
}

.bookmarks {
	display: grid;
	grid-template-columns: 80px 138px 191px 193px 192px 192px 193px 193px 192px 1fr auto;
	align-items: center;
	height: 47px;
	padding: 0 24px 1px 20px;
	border-bottom: 2px solid #dadce0;
	background: #fff;
	font-size: 14px;
	color: #3c4043;
}
.bm {
	display: flex;
	align-items: center;
	gap: 11px;
	white-space: nowrap;
}
.bm svg {
	width: 20px;
	height: 20px;
}
.bm:first-child svg {
	width: 17px;
	height: 17px;
}
.oth {
	font-size: 6px;
	font-weight: 700;
	fill: #fff;
	text-anchor: middle;
}
.bm-more {
	font-size: 17px;
	color: #5f6368;
}

/* github header */
.site-header {
	display: flex;
	align-items: center;
	height: 78px;
	padding: 0 40px;
	background: #24292e;
	color: #fff;
}
.site-logo {
	width: 40px;
	height: 40px;
	margin-right: 20px;
}
.search {
	display: flex;
	align-items: center;
	justify-content: space-between;
	width: 340px;
	height: 38px;
	padding: 0 11px 0 16px;
	border: 1px solid #444d56;
	border-radius: 7px;
	color: #c4c6c8;
}
.search kbd {
	width: 24px;
	height: 26px;
	border: 1px solid #444d56;
	border-radius: 4px;
	font: 13px/24px "Noto Sans", sans-serif;
	text-align: center;
	color: #959da5;
}
.site-nav {
	display: flex;
	gap: 20px;
	margin-left: 20px;
	padding-top: 1px;
	font-size: 15.9px;
	font-weight: 600;
}
.site-actions {
	display: flex;
	align-items: center;
	margin-left: auto;
}
.bell {
	position: relative;
	width: 20px;
	height: 20px;
	margin-right: 20px;
}
.bell svg {
	display: block;
	width: 20px;
	height: 20px;
}
.bell-dot {
	position: absolute;
	top: -10px;
	left: 9px;
	width: 14px;
	height: 14px;
	border: 1px solid #24292e;
	border-radius: 50%;
	background: #2188ff;
}
.site-action {
	display: flex;
	align-items: center;
	gap: 5px;
}
.plus {
	width: 20px;
	height: 20px;
	margin-right: 1px;
}
.site-avatar {
	width: 25px;
	height: 25px;
	margin-left: 19px;
}
.caret {
	display: inline-block;
	width: 0;
	height: 0;
	border: 5px solid transparent;
	border-top-color: currentColor;
	border-bottom: 0;
}
.caret-dark {
	color: #586069;
	margin-left: 5px;
}
.caret-up {
	color: #24292e;
	margin-left: 5px;
	transform: translateY(-3px);
}

/* repo head */
.repo-head {
	height: 139px;
	padding-top: 22px;
	background: #fafbfc;
	border-bottom: 1px solid #e1e4e8;
}
.repo-title-row {
	display: flex;
	align-items: center;
	justify-content: space-between;
	height: 34px;
	padding: 0 41px;
}
.repo-title {
	display: flex;
	align-items: center;
	padding-top: 2px;
	font-size: 23.7px;
	font-weight: 400;
	color: #0366d6;
}
.repo-icon {
	width: 20px;
	height: 20px;
	margin-right: 9px;
	color: #6a737d;
}
.slash {
	margin: 0 5px;
	color: #586069;
}
.repo-name {
	font-weight: 600;
}
.repo-actions {
	display: flex;
	gap: 14px;
	font-size: 14px;
}
.counter-btn {
	display: flex;
	height: 34px;
	background: #fafbfc;
	border: 1px solid rgba(27, 31, 35, .15);
	border-radius: 7px;
	box-shadow: 0 1px 0 rgba(27, 31, 35, .04);
}
.btn-main {
	display: flex;
	align-items: center;
	gap: 5px;
	padding: 0 16px;
	border-right: 1px solid rgba(27, 31, 35, .15);
}
.btn-main svg {
	width: 20px;
	height: 20px;
	color: #586069;
}
.btn-watch {
	padding: 0 14px;
}
.btn-star {
	gap: 8px;
	padding: 0 16px;
}
.btn-muted {
	color: #6a737d;
}
.btn-count {
	width: 37px;
	line-height: 32px;
	text-align: center;
}
.repo-nav {
	display: flex;
	height: 54px;
	margin: 28px 0 0 40px;
	font-size: 16.3px;
}
.repo-tab {
	display: flex;
	align-items: center;
	gap: 8px;
	padding: 0 20.7px 1px;
	border-bottom: 3px solid transparent;
	color: #24292e;
}
.repo-tab svg {
	width: 20px;
	height: 20px;
	color: #959da5;
}
.repo-tab.selected {
	padding: 0 20px 1px;
	font-weight: 600;
	border-bottom-color: #f9826c;
}
.repo-tab.selected svg {
	color: #24292e;
}

/* content */
.content {
	width: 1520px;
	margin: 40px auto 0;
}
.file-nav {
	display: flex;
	align-items: center;
	height: 40px;
}
.btn {
	display: inline-flex;
	align-items: center;
	height: 40px;
	padding: 1px 21px 0;
	background: #fafbfc;
	border: 1px solid rgba(27, 31, 35, .15);
	border-radius: 7px;
	box-shadow: 0 1px 0 rgba(27, 31, 35, .04);
	color: inherit;
	font: inherit;
	font-size: 17.2px;
}
.branch-btn {
	width: 210px;
	white-space: nowrap;
}
.branch-btn svg {
	width: 20px;
	height: 20px;
	margin-right: 9px;
	color: #586069;
}
.branch-btn .caret {
	margin-left: 8px;
}
.crumbs {
	display: flex;
	align-items: center;
	gap: 5px;
	margin-left: 11px;
	padding-top: 1px;
	font-size: 19px;
	color: #0366d6;
}
.crumb-root {
	font-weight: 600;
}
.crumbs .sep {
	color: #586069;
}
.crumbs strong {
	margin-left: 2px;
	font-size: 18.5px;
	font-weight: 500;
	color: #24292e;
}
.file-actions {
	display: flex;
	gap: 10px;
	margin-left: auto;
}
.btn-more {
	width: 62px;
	justify-content: center;
	padding: 0;
	color: #6a737d;
}
.btn-more svg {
	width: 20px;
	height: 20px;
}
.branch-info {
	display: flex;
	align-items: center;
	justify-content: space-between;
	height: 69px;
	margin-top: 20px;
	padding: 0 20px;
	background: #fafbfc;
	border: 1px solid #e1e4e8;
	border-radius: 7px;
}
.branch-links {
	display: flex;
	gap: 20px;
	font-size: 16.1px;
	color: #586069;
}
.branch-links a {
	display: flex;
	align-items: center;
	gap: 6px;
}
.branch-links svg {
	width: 20px;
	height: 20px;
}
.file-box {
	margin-top: 21px;
	border: 1px solid #e1e4e8;
	border-radius: 7px;
	overflow: hidden;
}
.commit-row {
	display: flex;
	align-items: center;
	height: 67px;
	padding: 0 20px 0 16px;
	margin: -1px -1px 0;
	background: #f1f8ff;
	border: 1px solid #c8e1ff;
	border-radius: 7px 7px 0 0;
}
.commit-avatar {
	width: 29px;
	height: 29px;
	margin-right: 15px;
}
.commit-author {
	font-size: 16.2px;
	font-weight: 600;
	margin-right: 5px;
}
.commit-msg {
	font-size: 16.2px;
	color: #586069;
	flex: 1;
}
.sha {
	font: 13.5px "Liberation Mono", monospace;
	color: #586069;
	margin-right: 10px;
}
.commit-age {
	color: #586069;
	margin-right: 20px;
}
.history {
	display: flex;
	align-items: center;
	gap: 5px;
	font-weight: 600;
}
.history svg {
	width: 20px;
	height: 20px;
	color: #586069;
}
.file-row {
	display: flex;
	align-items: center;
	height: 46px;
	padding: 0 20px;
	border-top: 1px solid #eaecef;
}
.up-row {
	height: 46px;
	border-top: 0;
	color: #0366d6;
}
.up-row a {
	margin-left: 1px;
	font-size: 14px;
	font-weight: 600;
	transform: translateY(2px);
}
.ficon {
	width: 20px;
	height: 20px;
	margin-right: 20px;
}
.folder {
	color: #79b8ff;
}
.doc {
	color: #6a737d;
}
.fname {
	width: 471px;
}
.fmsg {
	flex: 1;
	color: #586069;
}
.fage {
	color: #6a737d;
}
.hovered {
	background: #f6f8fa;
}

/* footer */
.site-footer {
	display: flex;
	align-items: center;
	justify-content: space-between;
	width: 1559px;
	height: 124px;
	margin: 70px auto 0;
	padding-top: 1px;
	border-top: 1px solid #eaecef;
	font-size: 14px;
	color: #0366d6;
}
.footer-links {
	display: flex;
	gap: 62px;
}
.footer-right {
	gap: 71.5px;
}
.copyright {
	color: #586069;
}
.footer-logo {
	width: 30px;
	height: 30px;
	margin-top: 6px;
	color: #d1d5da;
}

.annotations {
	position: absolute;
	top: 0;
	left: 0;
	width: 1920px;
	height: 1030px;
	fill: none;
	stroke: #ed1c24;
	stroke-width: 5;
	pointer-events: none;
}
```
